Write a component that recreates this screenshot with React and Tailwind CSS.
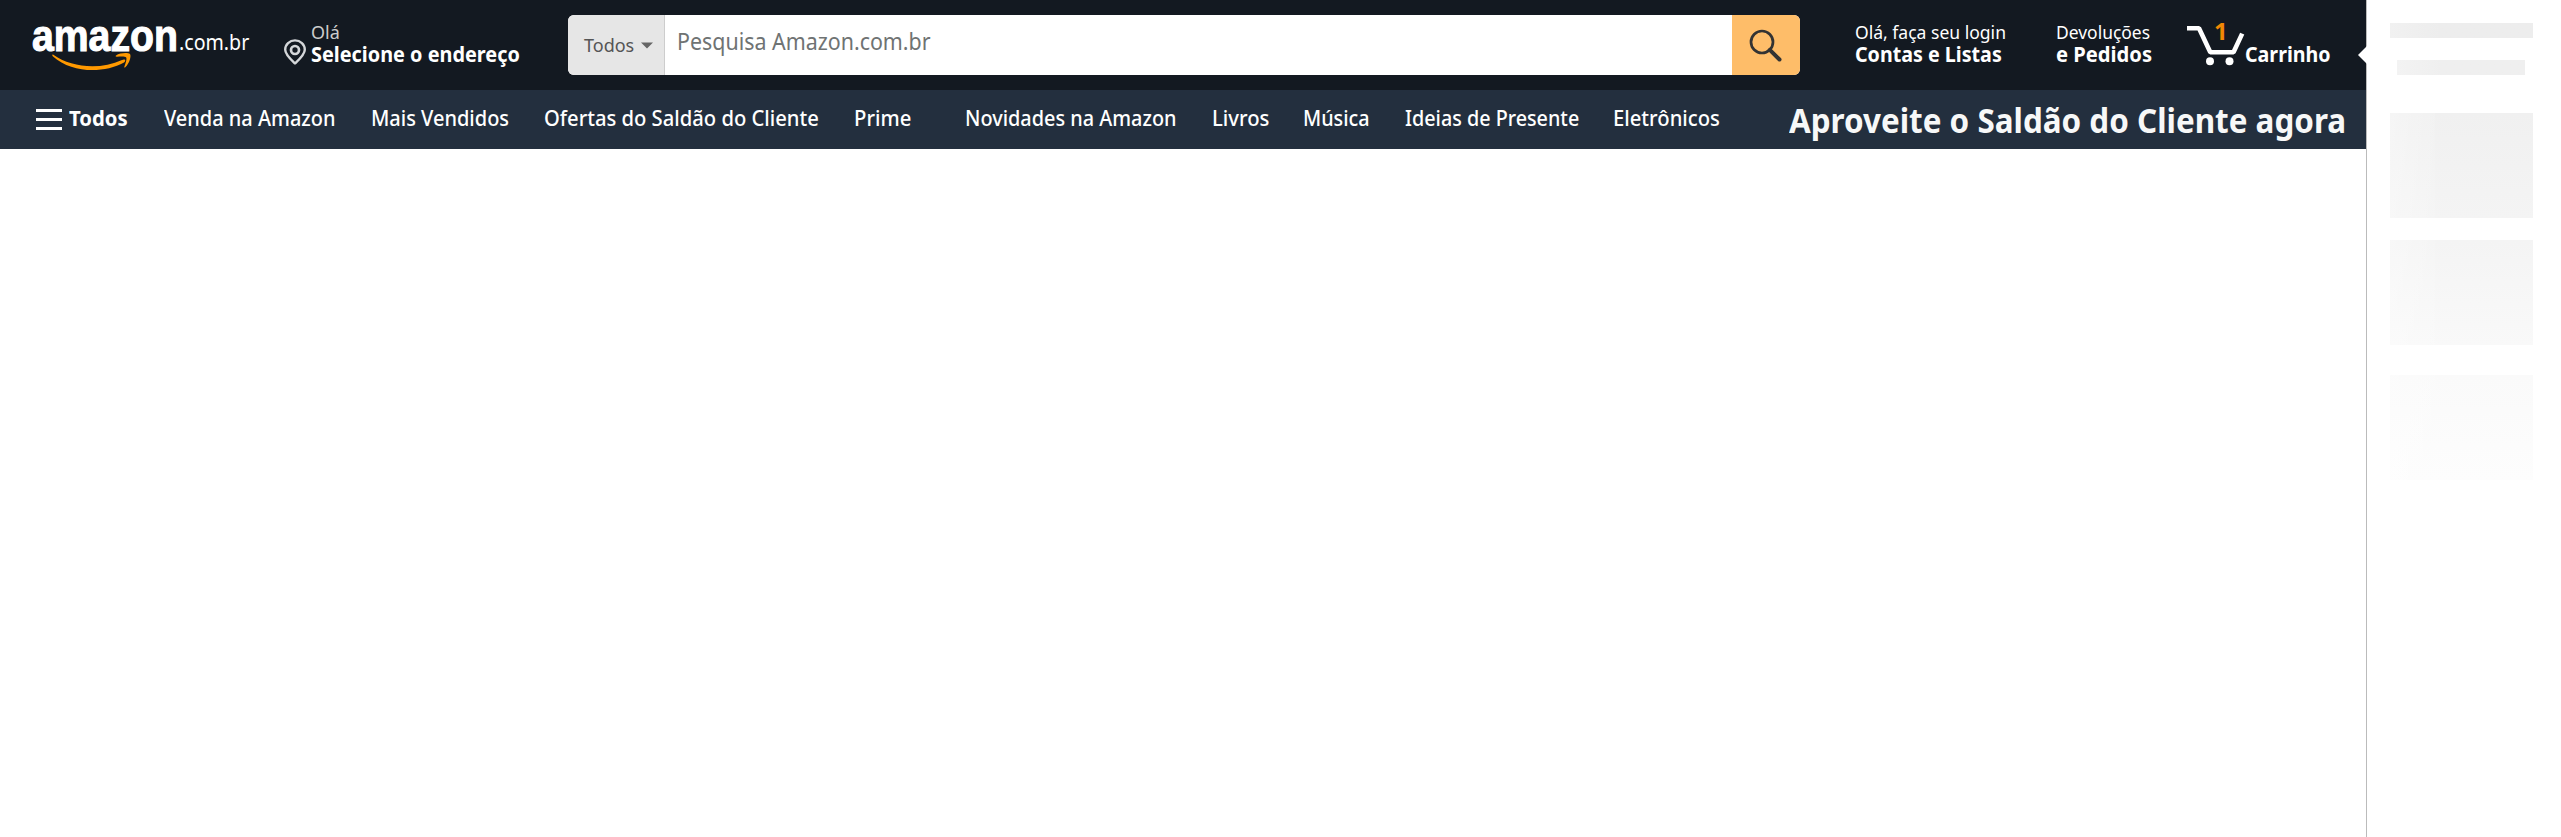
import { useLayoutEffect, useRef, useState } from "react";

/* Condenses or widens a line of text so that it fills the box given by className. */
function Fit({ className, children }) {
  const box = useRef(null);
  const text = useRef(null);
  const [scale, setScale] = useState(1);
  useLayoutEffect(() => {
    setScale(box.current.clientWidth / text.current.offsetWidth);
  }, [children]);
  return (
    <span ref={box} className={"block shrink-0 whitespace-nowrap " + className}>
      <span ref={text} className="inline-block origin-left" style={{ transform: `scaleX(${scale})` }}>
        {children}
      </span>
    </span>
  );
}

function Logo() {
  return (
    <div className="w-[148px] shrink-0 pl-px">
      <Fit className="h-[44px] w-[146px] font-['Liberation_Sans',Arial,sans-serif] text-[44px] font-bold leading-[44px] [-webkit-text-stroke:1.1px_#fff]">
        amazon
      </Fit>
      <svg className="-mt-[6px] ml-[20px] block" width="80" height="20" viewBox="52 52 80 20">
        <path d="M53 54.5 C72 68 100 70 122 60 C125 58.5 126.500 60.500 124 62.500 C104 73.500 72 73.500 53 56.500 C51.800 55.200 52.200 54 53 54.500Z" fill="#ff9900" />
        <path d="M116 55.600 C120 52.700 128 52.600 130 54 C131.500 55.800 129.500 63.500 125.300 67.300 C124.600 67.900 124 67.500 124.300 66.700 C125.300 64.200 127.200 58.900 126.200 57.500 C125 56 120 56.500 117 56.800 C115.600 56.900 115.200 56.200 116 55.600Z" fill="#ff9900" />
      </svg>
    </div>
  );
}

function Pin() {
  return (
    <svg className="block shrink-0" width="24" height="27" viewBox="0 0 24 27" fill="none" stroke="#d4d6d9">
      <path d="M12 24.500 C9 21.500 2.200 15.500 2.200 10.700 A9.800 9.300 0 0 1 21.800 10.700 C21.800 15.500 15 21.500 12 24.500Z" strokeWidth="2.400" strokeLinejoin="round" />
      <circle cx="12" cy="11" r="4" strokeWidth="2.700" />
    </svg>
  );
}

function Cart() {
  return (
    <svg className="block" width="58" height="42" viewBox="0 0 58 42">
      <path d="M0 4.300 H12 L23.300 28.200 H46.500 L55.200 9.600" fill="none" stroke="#fff" strokeWidth="4.600" strokeLinejoin="bevel" />
      <circle cx="23" cy="37.200" r="4" fill="#fff" />
      <circle cx="42.500" cy="37.200" r="4" fill="#fff" />
    </svg>
  );
}

function TopBar() {
  return (
    <div className="flex h-[90px] items-start bg-[#131921] text-white">
      <div className="flex pl-[31px] pt-[14px]">
        <Logo />
        <Fit className="mt-[14px] w-[70px] text-[21px] leading-[28px]">.com.br</Fit>
      </div>
      <div className="ml-[34px] flex pt-[22px]">
        <div className="pt-[17px]"><Pin /></div>
        <div className="ml-[4px]">
          <Fit className="w-[29px] text-[18px] leading-[21px] text-[#ccc]">Olá</Fit>
          <Fit className="w-[209px] text-[21px] font-bold leading-[23px]">Selecione o endereço</Fit>
        </div>
      </div>
      <div className="ml-[48px] mt-[15px] flex h-[60px] w-[1232px] overflow-hidden rounded-md bg-white">
        <div className="flex w-[97px] items-center border-r border-[#cdcdcd] bg-[#e6e6e6] pl-[16px] text-[#555]">
          <Fit className="w-[50px] text-[18px] leading-[24px]">Todos</Fit>
          <svg className="ml-[7px]" width="12" height="7" viewBox="0 0 12 7"><path d="M0 0.500H12L6 6.500Z" fill="#666" /></svg>
        </div>
        <div className="flex-1 pl-[12px] pt-[11px] text-[#6f7373]">
          <Fit className="w-[254px] text-[23px] leading-[30px]">Pesquisa Amazon.com.br</Fit>
        </div>
        <div className="w-[68px] bg-[#febd69] pl-[17px] pt-[14px]">
          <svg width="34" height="34" viewBox="0 0 34 34" fill="none" stroke="#333">
            <circle cx="13" cy="13" r="11" strokeWidth="2.700" />
            <path d="M20.800 20.800L30.500 30.500" strokeWidth="4" strokeLinecap="round" />
          </svg>
        </div>
      </div>
      <div className="ml-[55px] pt-[22px]">
        <Fit className="w-[151px] text-[18px] leading-[21px]">Olá, faça seu login</Fit>
        <Fit className="w-[147px] text-[21px] font-bold leading-[23px]">Contas e Listas</Fit>
      </div>
      <div className="ml-[50px] pt-[22px]">
        <Fit className="w-[94px] text-[18px] leading-[21px]">Devoluções</Fit>
        <Fit className="w-[96px] text-[21px] font-bold leading-[23px]">e Pedidos</Fit>
      </div>
      <div className="relative ml-[35px] mt-6 w-[58px]">
        <Cart />
        <span className="absolute left-[27px] top-[-10px] text-[24px] font-bold leading-[34px] text-[#f08804]">1</span>
      </div>
      <Fit className="mt-[43px] w-[86px] text-[21px] font-bold leading-[23px]">Carrinho</Fit>
    </div>
  );
}

function NavBar() {
  return (
    <div className="flex h-[59px] items-center bg-[#232f3e] pb-[3px] pl-9 text-[21px] font-medium leading-[28px] text-white">
      <div className="flex w-[26px] flex-col gap-[6px] pt-[3px]">
        <div className="h-[3px] bg-white" />
        <div className="h-[3px] bg-white" />
        <div className="h-[3px] bg-white" />
      </div>
      <Fit className="ml-[7px] w-[59px] font-bold">Todos</Fit>
      <Fit className="ml-[36px] w-[172px]">Venda na Amazon</Fit>
      <Fit className="ml-[35px] w-[138px]">Mais Vendidos</Fit>
      <Fit className="ml-[35px] w-[275px]">Ofertas do Saldão do Cliente</Fit>
      <Fit className="ml-[35px] w-[57px]">Prime</Fit>
      <Fit className="ml-[54px] w-[212px]">Novidades na Amazon</Fit>
      <Fit className="ml-[35px] w-[57px]">Livros</Fit>
      <Fit className="ml-[34px] w-[67px]">Música</Fit>
      <Fit className="ml-[35px] w-[174px]">Ideias de Presente</Fit>
      <Fit className="ml-[34px] w-[107px]">Eletrônicos</Fit>
      <Fit className="ml-[69px] mt-[4px] w-[557px] text-[34px] font-bold leading-[44px] text-[#f7f8f8]">Aproveite o Saldão do Cliente agora</Fit>
    </div>
  );
}

function SidePanel() {
  return (
    <aside className="relative flex-1 border-l border-[#bbb] bg-white pl-[23px] pt-[23px]">
      <svg className="absolute left-[-10px] top-[45px]" width="11" height="20" viewBox="0 0 11 20"><path d="M11 0L1 10L11 20Z" fill="#fff" /></svg>
      <div className="h-[15px] w-[143px] bg-linear-to-r from-[#f1f1f1] to-[#ededed] to-35%" />
      <div className="ml-[7px] mt-[22px] h-[15px] w-[128px] bg-linear-to-r from-[#f3f3f3] to-[#efefef] to-35%" />
      <div className="mt-[38px] h-[105px] w-[143px] bg-linear-to-b from-[#f0f0f0] to-[#f4f4f4]">
        <div className="h-full w-[45px] bg-linear-to-r from-white/35 to-white/10" />
      </div>
      <div className="mt-[22px] h-[105px] w-[143px] bg-linear-to-b from-[#f4f4f4] to-[#f9f9f9]">
        <div className="h-full w-[45px] bg-linear-to-r from-white/35 to-white/10" />
      </div>
      <div className="mt-[30px] h-[105px] w-[143px] bg-linear-to-b from-[#fafafa] to-[#fdfdfd]">
        <div className="h-full w-[45px] bg-linear-to-r from-white/35 to-white/10" />
      </div>
    </aside>
  );
}

export default function App() {
  return (
    <div className="flex h-[837px] w-[2561px] overflow-hidden bg-white font-['Noto_Sans','Open_Sans',sans-serif]">
      <div className="w-[2366px] shrink-0">
        <TopBar />
        <NavBar />
      </div>
      <SidePanel />
    </div>
  );
}
